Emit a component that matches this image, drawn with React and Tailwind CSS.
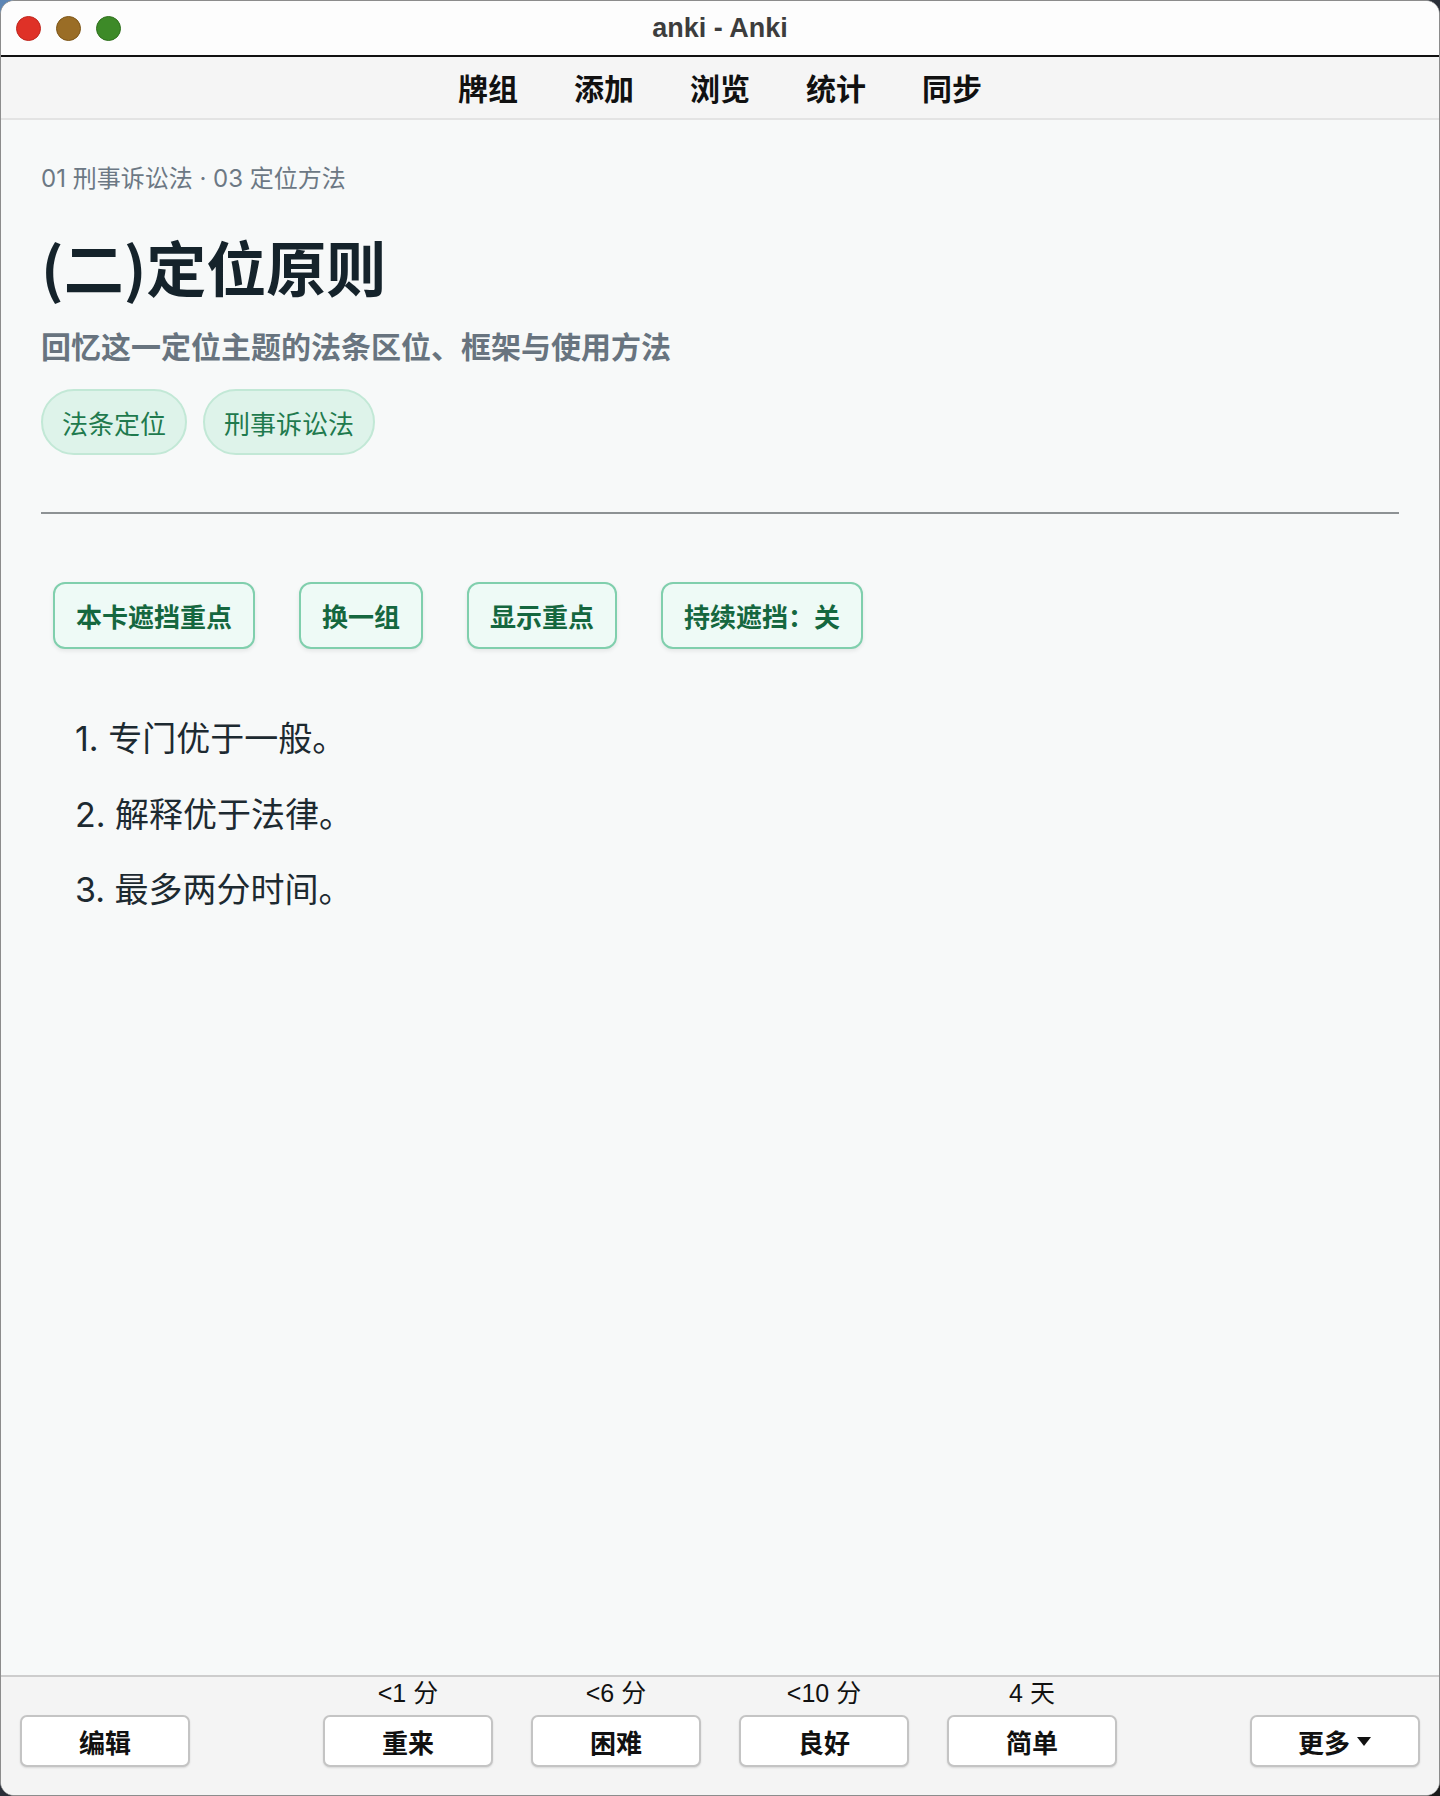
import React from "react";

const cjk = { fontFamily: '"Noto Sans CJK SC", "Noto Sans", sans-serif' };
const inter = { fontFamily: 'Inter, "Noto Sans CJK SC", sans-serif' };
const lib = { fontFamily: '"Liberation Sans", "Noto Sans CJK SC", sans-serif' };

function Light({ color, ring }) {
  return (
    <span
      className="block w-[25px] h-[25px] rounded-full border"
      style={{ backgroundColor: color, borderColor: ring }}
    />
  );
}

function GreenBtn({ children }) {
  return (
    <button
      className="h-[67px] px-[21px] rounded-[12px] border-2 border-[#80cfad] bg-[#eefaf6] text-[#15673f] text-[26px] font-bold shadow-[0_2px_4px_rgba(0,0,0,0.08)]"
      style={cjk}
    >
      {children}
    </button>
  );
}

function Tag({ children }) {
  return (
    <span
      className="h-[66px] px-[19px] flex items-center rounded-full border-2 border-[#c2e8d6] bg-[#def3ea] text-[#1f7a4e] text-[26px]"
      style={cjk}
    >
      {children}
    </span>
  );
}

function BarBtn({ children }) {
  return (
    <button
      className="w-[170px] h-[52px] flex items-center justify-center gap-[6px] rounded-[7px] border-2 border-[#c4c4c4] bg-white text-[#111] text-[26px] font-semibold shadow-[0_1px_2px_rgba(0,0,0,0.12)]"
      style={cjk}
    >
      {children}
    </button>
  );
}

function Answer({ label, time }) {
  return (
    <div className="flex flex-col items-center">
      <div className="h-[30px] leading-[30px] text-[25px] text-[#111]" style={lib}>
        {time}
      </div>
      <div className="mt-[7px]">
        <BarBtn>{label}</BarBtn>
      </div>
    </div>
  );
}

export default function App() {
  return (
    <div className="w-[1440px] h-[1796px] bg-linear-to-br from-[#5d86b5] via-[#2a2f38] to-[#1a1a1a]">
      <div className="w-full h-full flex flex-col rounded-[14px] overflow-hidden border border-[#8c8c8c] bg-[#f7f9f9]">
        {/* Title bar */}
        <div className="relative h-[56px] shrink-0 bg-[#fdfdfd] border-b-2 border-[#111] flex items-center">
          <div className="flex items-center gap-[15px] pl-[15px]">
            <Light color="#df3127" ring="#c0261d" />
            <Light color="#9a6d26" ring="#7e5617" />
            <Light color="#3d8a28" ring="#2f701d" />
          </div>
          <div
            className="absolute inset-0 flex items-center justify-center text-[27px] font-bold text-[#3d3d3d]"
            style={lib}
          >
            anki - Anki
          </div>
        </div>

        {/* Toolbar */}
        <div
          className="h-[63px] shrink-0 bg-[#f5f5f5] border-b-2 border-[#e3e3e3] flex items-center justify-center gap-[56px] text-[30px] font-bold text-[#111]"
          style={cjk}
        >
          <span>牌组</span>
          <span>添加</span>
          <span>浏览</span>
          <span>统计</span>
          <span>同步</span>
        </div>

        {/* Content */}
        <div className="flex-1 px-[40px] pt-[43px] bg-[#f7f9f9]">
          <div className="text-[24px] leading-[32px] text-[#6c7884]" style={inter}>
            01 刑事诉讼法 · 03 定位方法
          </div>
          <h1
            className="mt-[35px] text-[60px] leading-[72px] font-bold text-[#15232b]"
            style={cjk}
          >
            (二)定位原则
          </h1>
          <div
            className="mt-[23px] text-[30px] leading-[40px] font-semibold text-[#68747f]"
            style={cjk}
          >
            回忆这一定位主题的法条区位、框架与使用方法
          </div>
          <div className="mt-[24px] flex gap-[16px]">
            <Tag>法条定位</Tag>
            <Tag>刑事诉讼法</Tag>
          </div>
          <div className="mt-[57px] h-[2px] bg-[#8d9294]" />
          <div className="mt-[68px] pl-[12px] flex gap-[44px]">
            <GreenBtn>本卡遮挡重点</GreenBtn>
            <GreenBtn>换一组</GreenBtn>
            <GreenBtn>显示重点</GreenBtn>
            <GreenBtn>持续遮挡：关</GreenBtn>
          </div>
          <div
            className="mt-[52px] pl-[34px] text-[34px] leading-[75.5px] text-[#1d2a31]"
            style={inter}
          >
            <div>1. 专门优于一般。</div>
            <div>2. 解释优于法律。</div>
            <div>3. 最多两分时间。</div>
          </div>
        </div>

        {/* Bottom bar */}
        <div className="h-[120px] shrink-0 bg-[#f4f4f4] border-t-2 border-[#cdcdcd] px-[19px] pb-[28px] flex items-end justify-between">
          <BarBtn>编辑</BarBtn>
          <div className="flex gap-[38px]">
            <Answer label="重来" time="<1 分" />
            <Answer label="困难" time="<6 分" />
            <Answer label="良好" time="<10 分" />
            <Answer label="简单" time="4 天" />
          </div>
          <BarBtn>
            <span>更多</span>
            <svg width="16" height="11" viewBox="0 0 16 11">
              <path d="M1 1 L15 1 L8 10 Z" fill="#111" />
            </svg>
          </BarBtn>
        </div>
      </div>
    </div>
  );
}
